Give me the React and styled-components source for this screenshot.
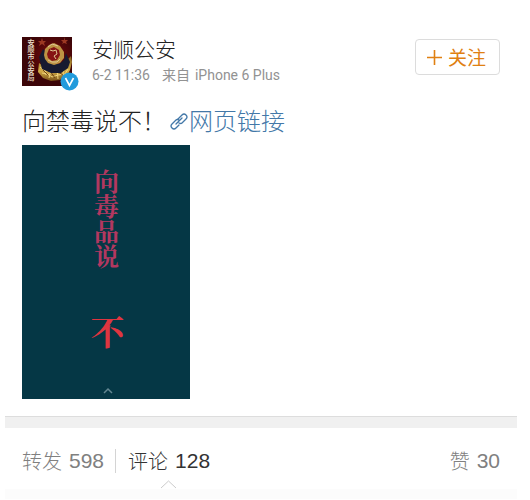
import React from "react";
import styled, { createGlobalStyle } from "styled-components";

const GlobalStyle = createGlobalStyle`
  * { box-sizing: border-box; }
  body {
    margin: 0;
    background: #fff;
    color: #222;
    font-family: "Liberation Sans", "Noto Sans CJK SC", sans-serif;
  }
  h1, p { margin: 0; font-weight: 300; }
`;

const Page = styled.main`
  padding: 36px 13px 0 5px;
`;

const Post = styled.article`
  padding: 0 17px 17px;
`;

const Header = styled.header`
  display: flex;
  align-items: flex-start;
  gap: 20px;
`;

const Avatar = styled.div`
  position: relative;
  flex: none;
  width: 50px;
  height: 50px;
`;

const AvatarArt = styled.svg`
  display: block;
  width: 100%;
  height: 100%;
`;

const AvatarName = styled.span`
  position: absolute;
  top: 3px;
  left: 3px;
  writing-mode: vertical-rl;
  font-size: 7px;
  line-height: 10px;
  font-weight: 500;
  color: #f0e3d0;
`;

const Verified = styled.svg`
  position: absolute;
  right: -7px;
  bottom: -5px;
  width: 19px;
  height: 19px;
`;

const Author = styled.div`
  flex: 1;
`;

const Name = styled.h1`
  font-size: 21px;
  line-height: 27px;
`;

const Meta = styled.p`
  display: flex;
  gap: 12px;
  padding-top: 2px;
  font: 14px/20px Roboto, "Noto Sans CJK SC", sans-serif;
  color: #929292;
`;

const Source = styled.span`
  display: flex;
  gap: 5px;
`;

const Follow = styled.button`
  display: flex;
  align-items: center;
  justify-content: center;
  gap: 6px;
  width: 85px;
  height: 36px;
  margin-top: 3px;
  padding: 0 2px 0 0;
  border: 1px solid #dcdcdc;
  border-radius: 4px;
  background: #fff;
  color: #e08012;
  font: 400 19px/30px "Noto Sans CJK SC", sans-serif;
`;

const Message = styled.p`
  display: flex;
  align-items: center;
  padding-top: 16px;
  font-size: 24px;
  line-height: 40px;
`;

const PageLink = styled.a`
  display: inline-flex;
  align-items: center;
  gap: 1px;
  padding-left: 4px;
  color: #4378a8;
  text-decoration: none;
`;

const Poster = styled.div`
  display: flex;
  flex-direction: column;
  align-items: center;
  width: 168px;
  height: 254px;
  margin-top: 3px;
  padding: 24px 0 4px 3px;
  background: #053745;
  font-family: "Noto Serif CJK SC", "Noto Sans CJK SC", serif;
  font-weight: 700;
`;

const Slogan = styled.span`
  writing-mode: vertical-rl;
  padding-right: 2px;
  font-size: 25px;
  line-height: 26px;
  color: #b23860;
`;

const Refusal = styled.span`
  flex: 1;
  padding-top: 42px;
  font-size: 34px;
  line-height: 40px;
  color: #df3540;
`;

const Band = styled.div`
  height: 12px;
  border-top: 1px solid #dddddd;
  background: #f0f0f0;
`;

const Counts = styled.nav`
  display: flex;
  align-items: center;
  padding: 16px 17px 0;
`;

const Count = styled.button`
  display: flex;
  align-items: center;
  gap: 7px;
  padding: 0;
  border: 0;
  background: none;
  color: ${({ $active }) => ($active ? "#333" : "#808080")};
  font: 300 20px/34px "Noto Sans CJK SC", sans-serif;
  &:last-child { margin-left: auto; }
`;

const Number = styled.span`
  font-family: "Liberation Sans", sans-serif;
  font-size: 21px;
`;

const Divider = styled.span`
  width: 1px;
  height: 24px;
  margin: 0 12px 0 11px;
  background: #d4d4d4;
`;

const Marker = styled.svg`
  display: block;
  margin: 2px 0 0 155px;
`;

const Comments = styled.section`
  height: 10px;
  background: #fcfcfc;
`;

export default function App() {
  return (
    <>
      <GlobalStyle />
      <Page>
        <Post>
          <Header>
            <Avatar>
              <AvatarArt viewBox="0 0 50 50" aria-hidden="true">
                <defs>
                  <radialGradient id="red" cx="60%" cy="40%">
                    <stop offset="0" stopColor="#7d0b0b" />
                    <stop offset="1" stopColor="#3c0508" />
                  </radialGradient>
                  <linearGradient id="gold" x2="0" y2="1">
                    <stop offset="0" stopColor="#80601e" />
                    <stop offset=".6" stopColor="#d5ae48" />
                    <stop offset="1" stopColor="#785017" />
                  </linearGradient>
                </defs>
                <path d="M0 1h50v49H0z" fill="url(#red)" />
                <path d="m20 2 1 3 3 0-2 2 1 3-3-2-3 2 1-3-2-2 3 0zM42 1l1 3 3 0-2 2 1 2-3-1-2 1 1-2-2-2 3 0z" fill="#9c3822" />
                <path d="m17 27 3 2 6 3 8 1 7-3 5-7 3-3 1 6-2 8-3 6-7 4-9 1-8-3-5-6z" fill="url(#gold)" />
                <path d="m18 31 5 4 7-1 5 3 7-4 5-6M20 37l6 1 4 3 6-2 7-1 3-5M23 32l1 7M29 33l-2 9M35 32l1 11M42 29l-1 10" fill="none" stroke="#f2d67d" strokeWidth="1" />
                <path d="m21 34 5 5m2-4 5 7m3-6 5 3" stroke="#6f4416" strokeWidth="1" />
                <path d="m17 21 4-8 4 4 0 7 5 4 7 0 5-4 2-7 4 9-2 6-7 5-10 0-9-4z" fill="#171a30" />
                <path d="m22 19 1-6 4-4 5-2 6 3 4 6 0 6-4 5-6 2-6-2-3-4z" fill="#bd9344" />
                <path d="m25 18 2-5 5-2 5 3 1 5-3 5-5 1-4-3z" fill="#861314" />
                <path d="m28 14 3 1 3-1 1 4-3 2 2 3M26 24l4 2 5 0 3-3M26 11l4-3 6 2" fill="none" stroke="#dfc691" strokeWidth="1" />
              </AvatarArt>
              <AvatarName>安顺市公安局</AvatarName>
              <Verified viewBox="0 0 19 19" role="img" aria-label="已认证">
                <circle cx="9.5" cy="9.5" r="9" fill="#229bdc" />
                <path d="m5.500 6 4 7.500 4-7.500" fill="none" stroke="#fff" strokeWidth="1.6" />
              </Verified>
            </Avatar>
            <Author>
              <Name>安顺公安</Name>
              <Meta>
                <span>6-2 11:36</span>
                <Source><span>来自</span><span>iPhone 6 Plus</span></Source>
              </Meta>
            </Author>
            <Follow>
              <svg width="15" height="15" viewBox="0 0 15 15" aria-hidden="true">
                <path d="M7.500 0v15M0 7.500h15" stroke="currentColor" strokeWidth="1.6" />
              </svg>
              关注
            </Follow>
          </Header>
          <Message>
            向禁毒说不！
            <PageLink href="#link">
              <svg width="18" height="18" viewBox="0 0 18 18" fill="none" stroke="currentColor" strokeWidth="1.3" strokeLinecap="round" strokeLinejoin="round" aria-hidden="true">
                <path d="m8 6 4-4q2-2 4 0t0 4l-4 4q-1 1-3 0M9 12l-3 3q-2 2-4 0t0-4l4-4q1-1 3 0M6 11l6-6" />
              </svg>
              网页链接
            </PageLink>
          </Message>
          <Poster>
            <Slogan>向毒品说</Slogan>
            <Refusal>不</Refusal>
            <svg width="12" height="8" viewBox="0 0 12 8" aria-hidden="true">
              <path d="m2 6 4-4 4 4" fill="none" stroke="#648792" strokeWidth="1.5" />
            </svg>
          </Poster>
        </Post>
        <Band />
        <Counts>
          <Count>转发 <Number>598</Number></Count>
          <Divider />
          <Count $active>评论 <Number>128</Number></Count>
          <Count>赞 <Number>30</Number></Count>
        </Counts>
        <Marker width="17" height="9" viewBox="0 0 17 9" aria-hidden="true">
          <path d="m1 8 7.500-7 7.500 7" fill="none" stroke="#cccccc" />
        </Marker>
        <Comments aria-label="评论列表" />
      </Page>
    </>
  );
}
